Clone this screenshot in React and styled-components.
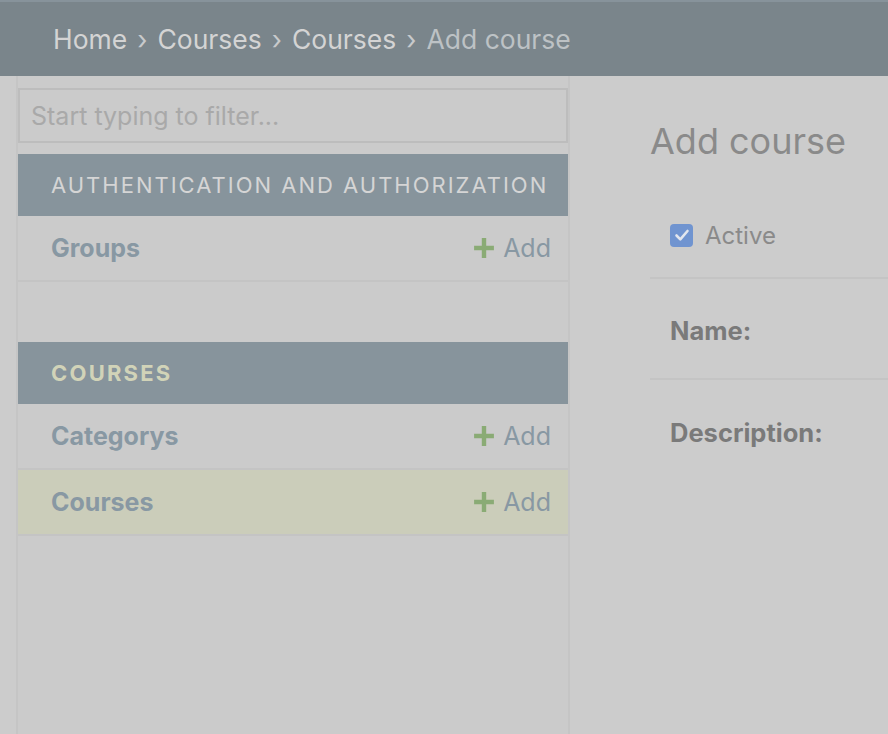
import React from "react";
import styled, { createGlobalStyle } from "styled-components";

const GlobalStyle = createGlobalStyle`
  html, body {
    margin: 0;
    padding: 0;
    background: #cccccc;
    font-family: Inter, "Noto Sans", "Liberation Sans", sans-serif;
  }
  #root {
    min-height: 100vh;
  }
`;

const apps = [
  {
    name: "Authentication and Authorization",
    current: false,
    models: [{ name: "Groups" }],
  },
  {
    name: "Courses",
    current: true,
    models: [{ name: "Categorys" }, { name: "Courses", active: true }],
  },
];

function App() {
  return (
    <>
      <GlobalStyle />
      <Page>
        <Header>
          <Crumbs>
            <CrumbLink>Home</CrumbLink>
            <Sep>›</Sep>
            <CrumbLink>Courses</CrumbLink>
            <Sep>›</Sep>
            <CrumbLink>Courses</CrumbLink>
            <Sep>›</Sep>
            <CrumbCurrent>Add course</CrumbCurrent>
          </Crumbs>
        </Header>
        <Body>
          <Sidebar>
            <Filter placeholder="Start typing to filter..." />
            {apps.map((app, i) => (
              <Module key={i}>
                <Caption current={app.current}>{app.name}</Caption>
                {app.models.map((m, j) => (
                  <ModelRow key={j} active={m.active}>
                    <ModelName>{m.name}</ModelName>
                    <AddLink>
                      <svg width="22" height="22" viewBox="0 0 20 20">
                        <path d="M8 1h4v7h7v4h-7v7H8v-7H1V8h7z" fill="#8aab75" />
                      </svg>
                      Add
                    </AddLink>
                  </ModelRow>
                ))}
              </Module>
            ))}
          </Sidebar>
          <Main>
            <Title>Add course</Title>
            <CheckRow>
              <CheckLabel>
                <CheckBox>
                  <svg width="18" height="18" viewBox="0 0 18 18">
                    <path
                      d="M3.5 9.5l3.8 3.8L14.5 5"
                      fill="none"
                      stroke="#e2e6ee"
                      strokeWidth="2.6"
                      strokeLinecap="round"
                      strokeLinejoin="round"
                    />
                  </svg>
                </CheckBox>
                Active
              </CheckLabel>
            </CheckRow>
            <FormRow>
              <FieldLabel>Name:</FieldLabel>
            </FormRow>
            <FormRow last>
              <FieldLabel>Description:</FieldLabel>
            </FormRow>
          </Main>
        </Body>
      </Page>
    </>
  );
}

export default App;

const Page = styled.div`
  display: flex;
  flex-direction: column;
  min-height: 100vh;
`;

const Header = styled.div`
  height: 74px;
  background: #7a858b;
  border-top: 2px solid #87939b;
  display: flex;
  align-items: center;
  padding-left: 53px;
`;

const Crumbs = styled.div`
  display: flex;
  align-items: center;
  font-size: 26.5px;
  color: #d3d3d3;
  margin-top: -1px;
`;

const CrumbLink = styled.span`
  color: #d4d4d4;
`;

const CrumbCurrent = styled.span`
  color: #bdc2c5;
`;

const Sep = styled.span`
  margin: 0 10px;
  color: #c8cacc;
`;

const Body = styled.div`
  flex: 1;
  display: flex;
`;

const Sidebar = styled.div`
  width: 550px;
  margin-left: 16px;
  border-left: 2px solid #c5c5c5;
  border-right: 2px solid #c5c5c5;
  background: #cbcbcb;
  padding-top: 12px;
  display: flex;
  flex-direction: column;
`;

const Filter = styled.input`
  box-sizing: border-box;
  height: 55px;
  width: 100%;
  margin: 0 0 11px 0;
  border: 2px solid #bdbdbd;
  background: #cbcbcb;
  font-family: inherit;
  font-size: 25px;
  padding: 0 11px;
  outline: none;
  &::placeholder {
    color: #a9a9a9;
  }
`;

const Module = styled.div`
  margin-bottom: 60px;
`;

const Caption = styled.div`
  height: 62px;
  display: flex;
  align-items: center;
  padding-left: 33px;
  background: #87949c;
  color: ${(p) => (p.current ? "#d1d3b8" : "#d5d5d5")};
  font-size: 22px;
  font-weight: ${(p) => (p.current ? 700 : 400)};
  letter-spacing: ${(p) => (p.current ? "2.2px" : "2px")};
  text-transform: uppercase;
`;

const ModelRow = styled.div`
  height: 66px;
  box-sizing: border-box;
  display: flex;
  align-items: center;
  justify-content: space-between;
  padding: 0 17px 0 33px;
  border-bottom: 2px solid #c4c4c4;
  background: ${(p) => (p.active ? "#cbcdba" : "transparent")};
`;

const ModelName = styled.span`
  color: #8898a3;
  font-size: 25px;
  font-weight: 700;
`;

const AddLink = styled.span`
  display: flex;
  align-items: center;
  gap: 8px;
  color: #8898a3;
  font-size: 25px;
`;

const Main = styled.div`
  flex: 1;
  padding: 43px 0 0 80px;
`;

const Title = styled.h1`
  margin: 0;
  height: 44px;
  line-height: 44px;
  font-size: 36px;
  font-weight: 400;
  color: #8a8a8a;
`;

const CheckRow = styled.div`
  height: 116px;
  box-sizing: border-box;
  display: flex;
  align-items: center;
  padding: 30px 0 0 20px;
  border-bottom: 2px solid #c4c4c4;
`;

const FormRow = styled.div`
  height: 101px;
  box-sizing: border-box;
  display: flex;
  align-items: center;
  padding: 4px 0 0 20px;
  border-bottom: ${(p) => (p.last ? "none" : "2px solid #c4c4c4")};
`;

const CheckLabel = styled.label`
  display: flex;
  align-items: center;
  gap: 12px;
  font-size: 24px;
  color: #8a8a8a;
`;

const CheckBox = styled.span`
  width: 23px;
  height: 23px;
  border-radius: 4px;
  background: #7094d0;
  display: flex;
  align-items: center;
  justify-content: center;
`;

const FieldLabel = styled.span`
  font-size: 25.5px;
  font-weight: 700;
  color: #7a7a7a;
`;
